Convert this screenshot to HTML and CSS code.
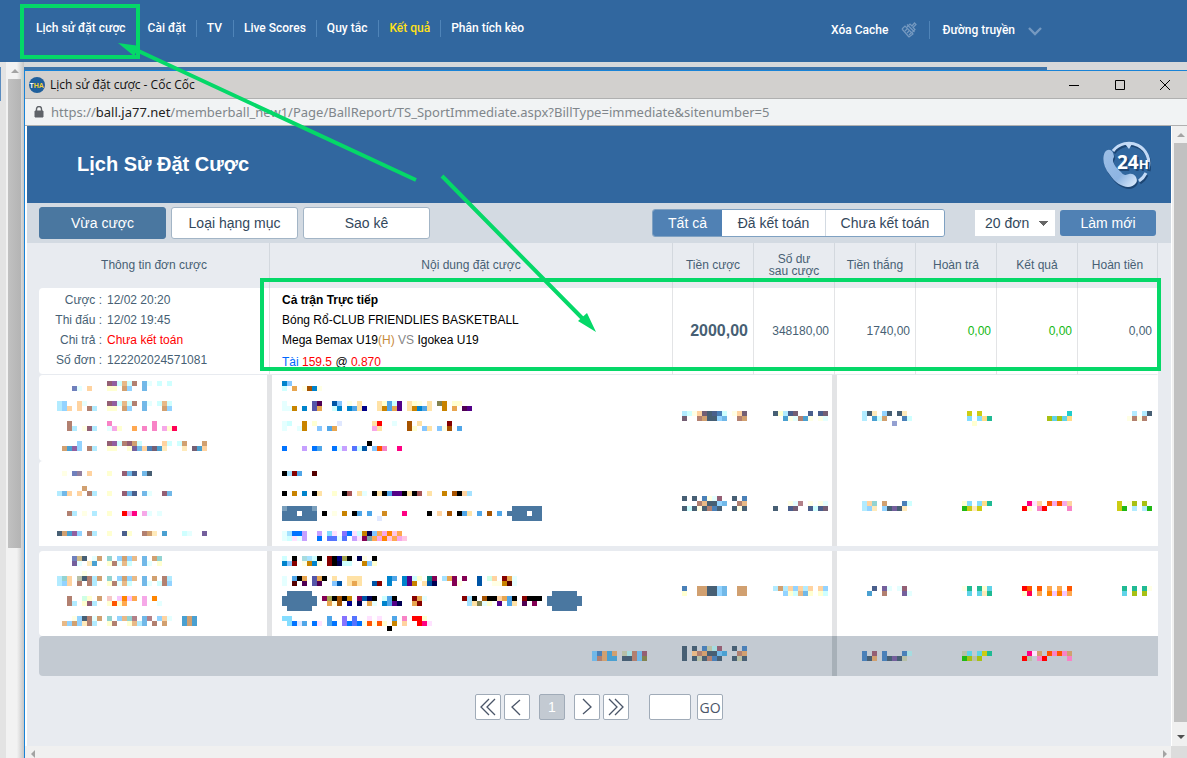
FILE: index.html
```html
<!DOCTYPE html>
<html lang="vi">
<head>
<meta charset="utf-8">
<title>Lịch sử đặt cược</title>
<link rel="stylesheet" href="styles.css">
</head>
<body>
<div class="desktop">
  <header class="site-bar">
    <nav class="site-nav">
      <a href="#">Lịch sử đặt cược</a>
      <a href="#">Cài đặt</a>
      <a href="#">TV</a>
      <a href="#">Live Scores</a>
      <a href="#">Quy tắc</a>
      <a href="#" class="highlight">Kết quả</a>
      <a href="#">Phân tích kèo</a>
    </nav>
    <div class="site-tools">
      <a href="#">Xóa Cache
        <svg width="16" height="16" viewBox="0 0 16 16" fill="none" stroke="#7599c0" stroke-width="1.2"><path d="M1 7l7 8M1 7l3-3 8 8-4 3M6 2.500l7.500 7.500M6 5l3-3 2 2 2.500-3 1.500 1.500-3 3 2 2-3 3M4 9l2-2M6 11l2-2M8 13l2-2"/></svg>
      </a>
      <a href="#">Đường truyền
        <svg width="14" height="14" viewBox="0 0 14 14" fill="none" stroke="#7599c0" stroke-width="2.400"><path d="M1 5l6 6 6-6"/></svg>
      </a>
    </div>
  </header>
  <div class="site-body">
    <div class="site-edge"></div>
    <div class="site-scroll"><span class="tri up"></span><span class="site-thumb"></span></div>
    <div class="site-strip"><div class="site-strip-bar"></div></div>
  </div>

  <section class="window">
    <div class="titlebar">
      <svg class="logo" width="16" height="16" viewBox="0 0 16 16"><circle cx="8" cy="8" r="8" fill="#1f5f9c"/><text x="0.500" y="10.500" class="logo-text" fill="#fff">T<tspan fill="#f3cf35">HA</tspan></text></svg>
      <span class="window-title">Lịch sử đặt cược - Cốc Cốc</span>
      <button class="win-btn" type="button" aria-label="Thu nhỏ"><svg width="12" height="12" viewBox="0 0 12 12"><path d="M1 6.500h10" stroke="#000" fill="none"/></svg></button>
      <button class="win-btn" type="button" aria-label="Phóng to"><svg width="12" height="12" viewBox="0 0 12 12"><path d="M1.500 1.500h9v9h-9z" stroke="#000" fill="none"/></svg></button>
      <button class="win-btn" type="button" aria-label="Đóng"><svg width="12" height="12" viewBox="0 0 12 12"><path d="M1 1l10 10M11 1L1 11" stroke="#000" fill="none"/></svg></button>
    </div>
    <div class="address">
      <svg width="10" height="12" viewBox="0 0 10 12"><path d="M1 5h8v6H1z" fill="#5f6368" stroke="#5f6368"/><path d="M2.500 5V3a2.500 2.500 0 0 1 5 0v2" fill="none" stroke="#5f6368" stroke-width="1.400"/></svg>
      <span>https://<b>ball.ja77.net</b>/memberball_new1/Page/BallReport/TS_SportImmediate.aspx?BillType=immediate&amp;sitenumber=5</span>
    </div>
    <div class="viewport">
      <main class="page">
        <header class="page-head">
          <h1>Lịch Sử Đặt Cược</h1>
          <svg class="support" width="48" height="48" viewBox="0 0 48 48">
            <defs><linearGradient id="phone" x1="0" y1="0" x2="1" y2="1"><stop offset="0" stop-color="#9dbfe6"/><stop offset="0.600" stop-color="#8db4e2"/><stop offset="1" stop-color="#e4f1ff"/></linearGradient></defs>
            <g transform="translate(1 1)" fill="none" stroke="#1d4674" stroke-width="3"><path d="M10 11A20 20 0 0 1 45 29M43 33A20 20 0 0 1 36 41"/></g>
            <path d="M10 10A20 20 0 0 1 45 28M43 32A20 20 0 0 1 36 40" fill="none" stroke="#c3daf6" stroke-width="3"/>
            <path d="M22 3h7l-3 5z" fill="#c3daf6"/>
            <path d="M2 11C6 6 11 10 11 16C8 20 12 26 18 31C21 35 23 34 26 33C31 31 36 38 33 42C27 50 14 45 7 34C0 26-1 17 2 11Z" fill="#1d4674" transform="translate(1 2)"/>
            <path d="M2 11C6 6 11 10 11 16C8 20 12 26 18 31C21 35 23 34 26 33C31 31 36 38 33 42C27 50 14 45 7 34C0 26-1 17 2 11Z" fill="url(#phone)"/>
            <g class="support-text" fill="#1d4674"><text x="16" y="30">24<tspan class="support-h">H</tspan></text></g>
            <g class="support-text" fill="#fff"><text x="14" y="28">24<tspan class="support-h">H</tspan></text></g>
          </svg>
        </header>

        <div class="toolbar">
          <div class="tabs">
            <button type="button" class="tab active">Vừa cược</button>
            <button type="button" class="tab">Loại hạng mục</button>
            <button type="button" class="tab">Sao kê</button>
          </div>
          <div class="filters">
            <div class="segment">
              <button type="button" class="active">Tất cả</button>
              <button type="button">Đã kết toán</button>
              <button type="button">Chưa kết toán</button>
            </div>
            <select class="page-size" aria-label="Số đơn mỗi trang"><option>20 đơn</option></select>
            <button type="button" class="refresh">Làm mới</button>
          </div>
        </div>

        <table class="bets">
          <colgroup><col class="c-info"><col><col class="c-num" span="5"><col class="c-last"></colgroup>
          <thead>
            <tr><th>Thông tin đơn cược</th><th>Nội dung đặt cược</th><th>Tiền cược</th><th>Số dư<br>sau cược</th><th>Tiền thắng</th><th>Hoàn trả</th><th>Kết quả</th><th>Hoàn tiền</th></tr>
          </thead>
          <tbody>
            <tr class="bet">
              <td class="text">
                <dl class="info">
                  <dt>Cược :</dt><dd>12/02 20:20</dd>
                  <dt>Thi đấu :</dt><dd>12/02 19:45</dd>
                  <dt>Chi trả :</dt><dd class="red">Chưa kết toán</dd>
                  <dt>Số đơn :</dt><dd>122202024571081</dd>
                </dl>
              </td>
              <td class="text content">
                <p><strong>Cả trận Trực tiếp</strong></p>
                <p>Bóng Rổ-CLUB FRIENDLIES BASKETBALL</p>
                <p>Mega Bemax U19<span class="tan">(H)</span> <span class="grey">VS</span> Igokea U19</p>
                <p class="odds"><span class="blue">Tài</span> <span class="red">159.5</span> @ <span class="red">0.870</span></p>
              </td>
              <td class="num stake">2000,00</td><td class="num">348180,00</td><td class="num">1740,00</td><td class="num green">0,00</td><td class="num green">0,00</td><td class="num">0,00</td>
            </tr>
            <tr class="masked first" data-mask="0"><td></td><td></td><td></td><td></td><td></td><td></td><td></td><td></td></tr>
            <tr class="masked gap" data-mask="1"><td></td><td></td><td></td><td></td><td></td><td></td><td></td><td></td></tr>
            <tr class="masked" data-mask="2"><td></td><td></td><td></td><td></td><td></td><td></td><td></td><td></td></tr>
          </tbody>
          <tfoot>
            <tr class="total" data-mask="3"><td></td><td></td><td></td><td></td><td></td><td></td><td></td><td></td></tr>
          </tfoot>
        </table>

        <div class="pager">
          <div class="pager-group">
            <button type="button" aria-label="Trang đầu"><svg width="18" height="18" viewBox="0 0 18 18"><path d="M10 1L2 9l8 8M16 1L8 9l8 8"/></svg></button>
            <button type="button" aria-label="Trang trước"><svg width="18" height="18" viewBox="0 0 18 18"><path d="M12 2L4 9l8 8"/></svg></button>
          </div>
          <button type="button" class="current">1</button>
          <div class="pager-group">
            <button type="button" aria-label="Trang sau"><svg width="18" height="18" viewBox="0 0 18 18"><path d="M5 1l8 8-8 7"/></svg></button>
            <button type="button" aria-label="Trang cuối"><svg width="18" height="18" viewBox="0 0 18 18"><path d="M2 1l8 8-8 8M8 1l8 8-8 8"/></svg></button>
          </div>
          <form class="jump"><input type="text" aria-label="Số trang"><button type="button">GO</button></form>
        </div>
      </main>
      <div class="v-scroll"><span class="tri up"></span><span class="v-thumb"></span><span class="tri down"></span></div>
      <div class="h-scroll"><span class="tri left"></span><span class="tri right"></span></div>
      <div class="corner"></div>
    </div>
  </section>

  <svg class="marks" width="1187" height="758" viewBox="0 0 1187 758" aria-hidden="true">
    <g fill="none" stroke="#05d868" stroke-width="4">
      <rect x="22" y="6" width="116" height="51"/>
      <rect x="262" y="280" width="897" height="89"/>
      <path d="M132 48L416 180M442 176L585 321"/>
    </g>
    <path d="M118 43L140 46 134 56ZM596 332L578 321 587 313Z" fill="#05d868"/>
  </svg>
</div>
<script src="mask.js"></script>
</body>
</html>
```
FILE: styles.css
```css
* { box-sizing: border-box; }
body { margin: 0; font-family: "Liberation Sans", Arial, sans-serif; font-size: 12px; color: #475f74; }
button, input, select { font: inherit; margin: 0; }
button { cursor: pointer; padding: 0; }
a { color: inherit; text-decoration: none; }
svg { display: block; }

.desktop { position: relative; display: flex; flex-direction: column; height: 100vh; overflow: hidden; background: #e3e3e3; }
.site-bar { display: flex; justify-content: space-between; height: 62px; background: #31679f; color: #fff; font-family: Roboto, sans-serif; font-weight: 500; flex: none; }
.site-nav { display: flex; align-items: flex-start; padding: 20px 0 0 26px; }
.site-nav a { padding: 0 10px; line-height: 17px; border-right: 1px solid #4f84b8; }
.site-nav a:nth-child(odd) { padding-right: 11px; }
.site-nav a:first-child { border-color: transparent; }
.site-nav a:last-child { border: 0; }
.site-nav .highlight { color: #ffe01a; }
.site-tools { display: flex; align-items: flex-start; padding: 21px 145px 0 0; }
.site-tools a { display: flex; gap: 13px; align-items: center; height: 18px; }
.site-tools a + a { margin-left: 12px; padding-left: 12px; border-left: 1px solid #4f84b8; }

.site-body { flex: 1; display: flex; min-height: 0; }
.site-edge { width: 6px; background: linear-gradient(#5a8cc0, #5a8cc0) 0 5px / 1px 34px no-repeat, #e3e3e3; }
.site-scroll { width: 18px; display: flex; flex-direction: column; align-items: center; padding: 7px 3px 0 2px; background: linear-gradient(90deg, #f2f2f2 60%, #c6c6c6); }
.site-thumb { width: 13px; height: 469px; margin-top: 5px; background: linear-gradient(90deg, #c1c1c1, #b4b4b4); }
.site-strip { flex: 1; padding-top: 5px; background: #d7d8da; }
.site-strip-bar { width: 88%; height: 4px; background: #3f74a9; }

.tri { width: 0; height: 0; border: 4px solid transparent; flex: none; }
.tri.up { border-top: 0; border-bottom-color: #a3a3a3; margin-bottom: 1px; }
.tri.down { border-bottom: 0; border-top-color: #505050; }
.tri.left { border-left: 0; border-right-color: #a3a3a3; }
.tri.right { border-right: 0; border-left-color: #a3a3a3; }

.window { position: absolute; left: 24px; right: 0; top: 70px; bottom: 0; display: flex; flex-direction: column; border: solid #1883d7; border-width: 1px 0 0 1px; background: #fff; }
.titlebar { display: flex; align-items: center; height: 28px; padding: 0 0 0 4px; background: #d2d0ce; border-bottom: 1px solid #b0b0b0; color: #111; font-family: "Open Sans", sans-serif; flex: none; }
.logo-text { font: bold 7px "Liberation Sans", sans-serif; }
.window-title { flex: 1; padding-left: 5px; }
.win-btn { display: grid; place-items: center; width: 46px; height: 26px; border: 0; background: none; }
.win-btn:last-child { width: 44px; }
.address { display: flex; align-items: center; gap: 7px; height: 27px; padding: 0 9px; background: #f1f3f4; border-bottom: 1px solid #b0b0b0; color: #80868b; font: 13px "Noto Sans", sans-serif; white-space: nowrap; flex: none; }
.address b { font-weight: 400; color: #222; }

.viewport { flex: 1; display: grid; grid-template-columns: minmax(0, 1fr) 16px; grid-template-rows: minmax(0, 1fr) 12px; min-height: 0; }
.page { margin-left: 2px; background: #e8ebf0; overflow: hidden; }
.v-scroll { display: flex; flex-direction: column; align-items: center; justify-content: space-between; padding: 7px 0 7px 3px; border-left: 1px solid #fff; background: #f0f0f0; }
.v-thumb { flex: 1; align-self: stretch; margin: 5px 0 13px -1px; background: #c1c1c1; }
.h-scroll { display: flex; align-items: center; justify-content: space-between; padding: 4px 4px 0 6px; background: #f0f0f0; }
.corner { background: #dcdcdc; }

.page-head { display: flex; align-items: center; justify-content: space-between; height: 77px; padding: 0 20px 0 50px; background: #31679f; }
.page-head h1 { margin: 0; color: #fff; font-size: 20px; font-weight: 700; }
.support-text { font: bold 19px "Open Sans", sans-serif; }
.support-h { font-size: 13px; }

.toolbar { display: flex; align-items: center; justify-content: space-between; height: 40px; padding: 0 15px 0 12px; background: #d3dae2; font-size: 14px; }
.tabs { display: flex; gap: 5px; }
.tab { width: 127px; height: 32px; border: 1px solid #a3b5c6; border-radius: 3px; background: #fff; color: #33485c; }
.tab.active { background: #4a77a0; border-color: #4a77a0; color: #fff; }
.filters { display: flex; align-items: center; }
.segment { display: flex; height: 28px; border: 1px solid #7fa1c2; border-radius: 3px; overflow: hidden; }
.segment button { width: 104px; border: 0; border-right: 1px solid #d3dae2; background: #fff; color: #33485c; }
.segment button:last-child { width: 118px; border: 0; }
.segment button.active { width: 69px; border: 0; background: #5081b4; color: #fff; }
.page-size { width: 80px; height: 26px; margin: 0 5px 0 30px; padding: 0 10px; border: 0; border-radius: 0; appearance: none; color: #33485c; background: conic-gradient(from 315deg at 50% 100%, #666 90deg, transparent 0) 63px 11px / 11px 5px no-repeat, #fff; }
.refresh { width: 96px; height: 26px; border: 0; border-radius: 3px; background: #5081b4; color: #fff; }

.bets { width: calc(100% - 25px); margin-left: 12px; table-layout: fixed; border-collapse: separate; border-spacing: 0; }
.c-info { width: 231px; }
.c-num { width: 81px; }
.c-last { width: 80px; }
.bets th { height: 45px; padding: 0 0 2px; font-weight: 400; line-height: 12px; border-right: 1px solid #d3d8de; }
.bets td { padding: 0; background: #fff; }
.bet td { height: 87px; border-right: 1px solid #e3e4e6; border-bottom: 1px solid #e8ebf0; }
.bet td:first-child { border-top-left-radius: 4px; border-bottom-left-radius: 4px; }
.bet td:last-child { border-right-color: transparent; }
.bets .text { vertical-align: top; padding-top: 2px; line-height: 20px; }
.info { display: grid; grid-template-columns: 63px 1fr; column-gap: 5px; margin: 0; }
.info dt { text-align: right; }
.info dd { margin: 0; }
.bets .content { padding-left: 12px; color: #000; }
.content p { margin: 0; }
.content .odds { padding-top: 2px; }
.bets .num { text-align: right; padding-right: 5px; }
.bets .stake { font-size: 16px; font-weight: 700; }
.red { color: #f00; }
.blue { color: #0068ff; }
.tan { color: #c98b3c; }
.grey { color: #868686; }
.bets .green { color: #14b814; }

.masked td { height: 85px; padding: 5px 6px 0 0; vertical-align: top; }
.masked.first td { height: 86px; padding-top: 6px; }
.masked.gap td { height: 90px; border-bottom: 5px solid #e8ebf0; }
.masked td:nth-child(1) { padding-left: 18px; box-shadow: inset -3px 0 #e3e4e6; }
.masked td:nth-child(2) { padding-left: 12px; box-shadow: inset 2px 0 #e3e4e6; }
.masked td:nth-child(4) { box-shadow: inset -3px 0 #e3e4e6; }
.masked td:nth-child(5) { box-shadow: inset 2px 0 #e3e4e6; }
.masked td:nth-child(n+3) svg, .total svg { margin-left: auto; }
.masked td:first-child { border-radius: 4px 0 0 4px; }
.bets .total td { height: 40px; padding: 10px 6px 0 0; vertical-align: top; background: #c3cad2; }
.bets .total td:first-child { border-radius: 4px 0 0 4px; }
.bets .total td:nth-child(2) { padding-right: 26px; }
.bets [data-mask] td:nth-child(3), .bets [data-mask] td:nth-child(4) { padding-right: 7px; }
.bets [data-mask] td:nth-child(5) { padding-right: 4px; }
.bets [data-mask] td:nth-child(6) { padding-right: 5px; }
.total td:nth-child(4) { box-shadow: inset -3px 0 #a7b0b8; }
.total td:nth-child(5) { box-shadow: inset 2px 0 #a7b0b8; }

.pager { display: flex; justify-content: center; gap: 9px; padding-top: 18px; }
.pager-group { display: flex; gap: 3px; }
.pager button { display: grid; place-items: center; width: 26px; height: 26px; border: 1px solid #a0abb8; border-radius: 2px; background: #fff; color: #4a5568; font-family: "Open Sans", sans-serif; font-size: 14px; }
.pager path { fill: none; stroke: #4a5568; stroke-width: 1.3; }
.pager .current { background: #c3cad2; color: #fff; font-family: "Liberation Sans", sans-serif; }
.jump { display: flex; gap: 6px; margin-left: 11px; }
.jump input { width: 42px; height: 26px; border: 1px solid #a0abb8; border-radius: 2px; background: #fff; }

.marks { position: absolute; left: 0; top: 0; pointer-events: none; }
```
FILE: mask.js
```js
// Masked cells: each cell is a grid of 5px blocks, one palette letter per block.
const SIZE = 5;
const palette = {
  a: "#b2ebff", b: "#93d3ff", c: "#ffd3a0", d: "#b28070", e: "#945f74", f: "#925fa0", g: "#cfffff", h: "#e8b987",
  i: "#d1a070", j: "#ffffd1", k: "#71b8e8", l: "#e5ffff", m: "#7080bc", n: "#f883c6", o: "#f6a8e8", p: "#ffa850",
  q: "#ff0055", r: "#4aa0d1", s: "#475f74", t: "#745f74", u: "#4a5f8c", v: "#4a80b8", w: "#ffeabb", x: "#ff0000",
  y: "#000000", z: "#745f9c", A: "#0083cc", B: "#85c6ff", C: "#e8a650", D: "#a65300", E: "#c88300", F: "#5555a8",
  G: "#500053", H: "#0055a6", I: "#50a6e8", J: "#ffe2a6", K: "#000088", L: "#530088", M: "#838350", N: "#0073ff",
  O: "#c6a0ff", P: "#5573ff", Q: "#ff5500", R: "#ff0083", S: "#860000", T: "#550000", U: "#a6e2ff", V: "#000053",
  W: "#a65555", X: "#4a77a0", Y: "#ffffe5", Z: "#ffe2ff", 0: "#ffffff", 1: "#20b814", 2: "#cccc14", 3: "#20ba94",
  4: "#85ddff", 5: "#a8c014", 6: "#60d3e8", 7: "#ffdd88", 8: "#94a0d1", 9: "#830053", "+": "#ff8500", "*": "#d18b20",
  "!": "#9280a0", "@": "#d1bb88", "#": "#93d3d1", "$": "#b8c0a8", "%": "#cfffe5", "&": "#f6c8c6", "^": "#f6c6ff",
  "~": "#b28088", "|": "#e0e8ff", "(": "#7a9fbc", "{": "#8573ff", "}": "#ffc6e5", "_": "#83a6a6", "[": "#a6dce0",
  "]": "#a6a650", "<": "#088080", ">": "#20cccc"
};
const pad = n => ".".repeat(n);
const masks = [
  [
    [30, 15, {0: "..........efghgd.kl.g.g", 1: "...ml.c...jj.ib..k", 4: "ab..cl....efghgd.kl.ghg", 5: "abc.c.da..jj.ib..k...ib",
      8: "..d.......n........n", 9: "..da.Yea..loj..p.n.n.ojq", 12: "....b.....efgdeig....cg.gi...i", 13: ".irfb.da..jj..jzkcvtrw...w.trc"}],
    [40, 15, {0: "AB", 1: "g.C.YDAY", 4: "l.....FG..HB.Y.J...JjIgL.JjY.J.ME.jj", 5: "llE.A.FC..gA.AIJK..JEICL.JEAIJ..E.C.GL",
      8: "lg..E.j....|......Jx..l..D.J.....S", 9: "l..lE..B.IC.......oJ.....Dj.BJ.BYD.I", 12: pad(17) + "y", 13: "N...O.NI..NlO.PgH.BQn..R"}],
    [13, 9, {6: "agYctsuvg.Yct", 7: "t..dissbk..di"}],
    [11, 9, {6: "sjaut..u.ut", 7: "..rYldrY.Yl"}],
    [10, 9, {6: "asw.bs.sw", 7: "a.rgi...vg", 8: "......8"}],
    [6, 9, {6: ".2.2", 7: ".4.473", 8: "..j"}],
    [10, 9, {6: pad(9) + ">", 7: ".....56567"}],
    [7, 9, {6: "...a.as", 7: "..YdYd"}]
  ],
  [
    [30, 15, {1: ".Y.m!.c...j..eku.ks", 4: ".....i", 5: "akc.c.da..j..eku.kl..ek", 9: "..da.Y.a..j..xoR.ol.l", 13: "sirfb.da..j..uj..diw.r...gl..z"}],
    [60, 15, {1: "yUSI..T", 5: "y.E.A.yJ..j.yW.Jl.yJyILLyJyW.J..E.DycU", 8: "(XXXXX(" + pad(39) + "XXXXXX",
      9: "XXX0XXX.y.Y.E.yI.I..*...R....y.c.D.yIJ.I.D.I.XXXX0XX", 10: "XXXXXXX" + pad(12) + "|" + pad(26) + "XXXXXX",
      13: "lUNNO..O.4Z.{NZgEVBpo+}p", 14: "lgZlO..N.PPlP.OZ9_po+}po}"}],
    [13, 9, {6: "s.s.vYle..s.v", 7: "...dhssbk..dh", 8: "sgsYsdvs..sYs"}],
    [11, 9, {7: "...Yl~.Y.Yl", 8: "s..ut..ugut"}],
    [10, 9, {7: "ac#.i...vg", 8: "abw.bszsw"}],
    [6, 9, {7: "j4.473", 8: "12w2"}],
    [10, 9, {7: ".RZc.QoQoc", 8: "xj.nx....n"}],
    [7, 9, {7: "2.Y5.5", 8: "21.a.a1"}]
  ],
  [
    [30, 15, {0: "...m@s.li.#.bibh.k.i#", 1: "...zl.wr..jdlhg..kl.j", 3: ".....Y", 4: "a#c.$sdai.#.bibh.k.i.da", 5: "abc.d.da..jdlhg..kl.gdb",
      8: "..d..%j.i.&.^+^p.o.+", 9: "..da.jea..jQjp...o..l", 12: "...Ybsdli.#.bh#~.k~.bcl..rir", 13: ".hbibwda..jd..jhak.d.i...rir"}],
    [60, 15, {0: "g.y.[Ugy.SyK]y.VY.y", 1: "ABS.YEAY.SyVgg..EBj", 4: "l.IyC.FCy.J..JJJ.....AI.ALgj.<9.UC9.9..H.%c.SCl",
      5: "l.T.G.FG..BH.JCJ..HS.A..ALE.JHV...9Y...H..YYETl", 7: ".XXXXX" + pad(48) + "XXXXX",
      8: "XXXXXXX.9]yDyE.9HVy.gIy...SCl.......SUy.DyycCIy.Syyy.XXXXXXX",
      9: "XXXXXXX..CYD.K.V.Cl.AILV..CS.........UJMlj.L.IJ.G.9..XXXXXXX", 10: ".XXXXX" + pad(48) + "XXXXX",
      12: "44.......I..{.P..Z.Z..I.n.xxj", 13: ".4N|I.NZ.IN.{NPNYQYQj.E.c..xRZ", 14: pad(21) + "y"}],
    [13, 9, {6: "v..iissbk..ii", 7: "j..iissbk..ii"}],
    [11, 9, {6: "aiacbcac.cb", 7: "..bjghkj.jg"}],
    [10, 9, {6: "..u.zl.le", 7: ".r..d...zl"}],
    [6, 9, {6: "Y3.3j6", 7: ".6.6w3"}],
    [10, 9, {6: "xQ.Q.p.p.Q", 7: "jq.p.+^+^p"}],
    [7, 9, {6: ".3.3.3Y", 7: ".6.5.5"}]
  ],
  [
    null,
    [11, 3, {1: "kviri.$[dke", 2: "kdirr.ssdkM"}],
    [13, 3, {0: "s.s.v$[e..s.v", 1: "s.hdisskr..di", 2: "s.s$sdvs..s$s"}],
    null,
    [10, 3, {1: "v.e.v...v[", 2: "vsi.vszs$"}],
    [6, 3, {1: "$6.623", 2: "15$5"}],
    [10, 3, {1: ".RZi.QnQni", 2: "x$.nx....n"}],
    null
  ]
];

document.querySelectorAll("[data-mask]").forEach(row => {
  masks[row.dataset.mask].forEach((mask, i) => {
    if (!mask) return;
    const [cols, lines, data] = mask;
    let rects = "";
    for (const [y, line] of Object.entries(data)) {
      [...line].forEach((ch, x) => {
        if (ch !== ".") rects += `<rect x="${x * SIZE}" y="${y * SIZE}" width="${SIZE}" height="${SIZE}" fill="${palette[ch]}"/>`;
      });
    }
    row.cells[i].innerHTML = `<svg width="${cols * SIZE}" height="${lines * SIZE}" shape-rendering="crispEdges" aria-hidden="true">${rects}</svg>`;
  });
});
```
